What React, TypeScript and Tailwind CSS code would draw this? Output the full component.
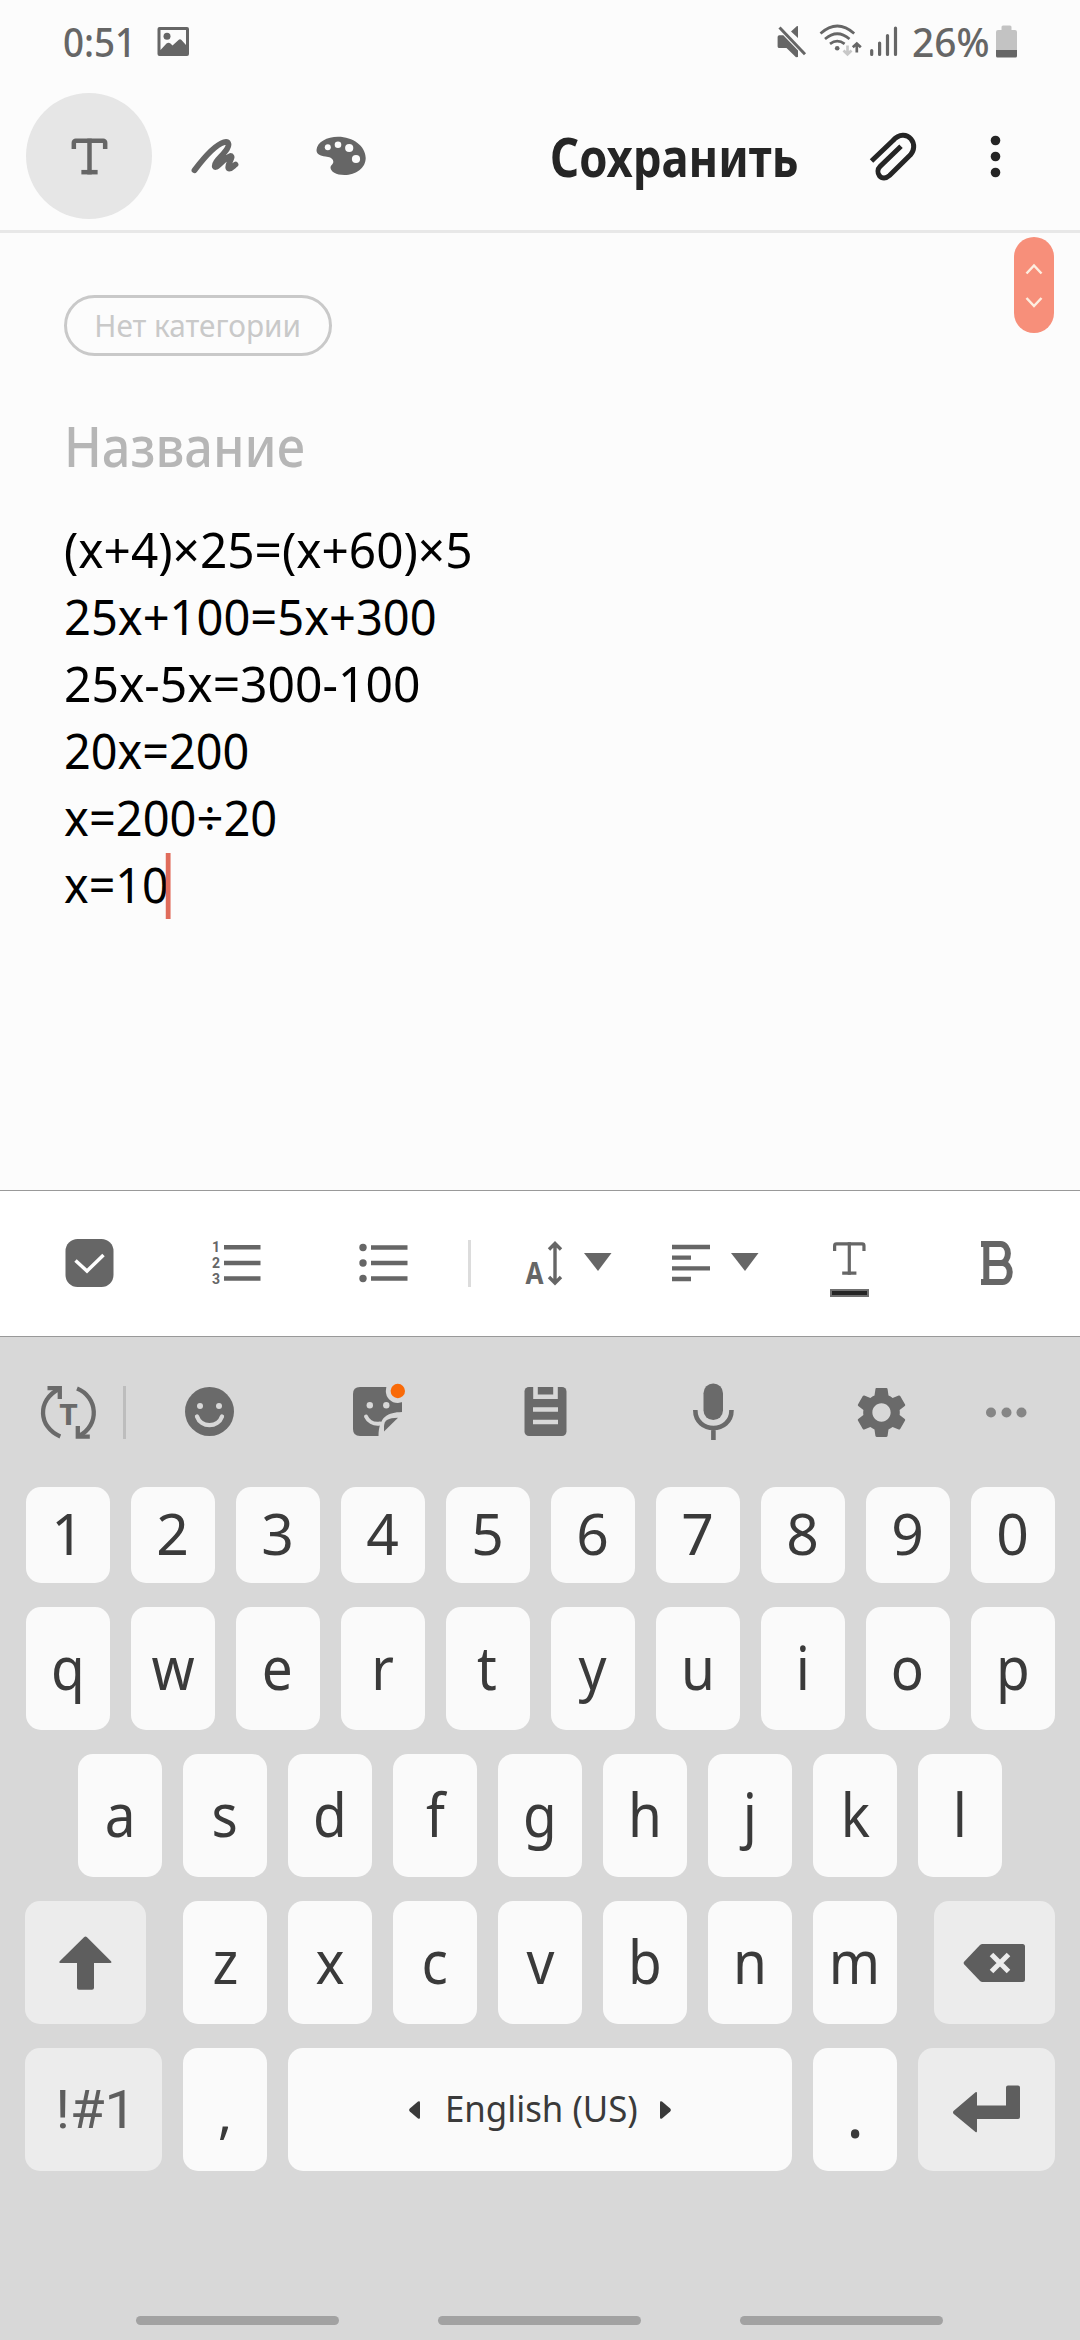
import type { ReactNode } from "react";
import { Bold, Type } from "lucide-react";
import { MdSettings } from "react-icons/md";
import clsx from "clsx";

type IconProps = {
  box: [number, number, number, number];
  className?: string;
  children: ReactNode;
};

function Icon({ box, className, children }: IconProps) {
  return (
    <svg
      viewBox={box.join(" ")}
      width={box[2]}
      height={box[3]}
      fill="currentColor"
      className={clsx("shrink-0", className)}
    >
      {children}
    </svg>
  );
}

function StatusBar() {
  return (
    <div className="flex h-[82px] items-center pl-[63px] text-[#666666]">
      <span className="w-[94px] pt-0.5 text-[40px] leading-[40px] font-medium">
        <span className="inline-block origin-left scale-x-[0.92]">0:51</span>
      </span>
      <Icon box={[157, 23, 32, 36]}>
        <path
          fillRule="evenodd"
          d="M159.500 27h27.500a2 2 0 0 1 2 2v25a2 2 0 0 1-2 2h-27.500a2 2 0 0 1-2-2v-25a2 2 0 0 1 2-2zM160.500 30v20l6-6.500q2-1.500 4 0l2 2 6-5.500q1.500-1.500 3 0l4.500 5v-15z"
        />
        <circle cx="167" cy="36.300" r="3.500" />
      </Icon>
      <Icon box={[776, 23, 32, 36]} className="ml-[587px]">
        <path d="M777.600 37q0-1.700 1.700-1.700h4L798 50.500V57l-2 .3-9.500-9.300h-7.200q-1.700 0-1.700-1.500zM791 31.500l6-5.500 1 .3V38z" />
        <path d="M779.500 27.500L805 54.200" stroke="currentColor" strokeWidth="3" />
      </Icon>
      <Icon box={[818, 23, 46, 36]} className="ml-2.5">
        <g fill="none" stroke="currentColor" strokeWidth="2.700">
          <path d="M820.500 33.500q16.800-15 33.700 0M825 39q12.300-10.500 24.500 0M830 43.800q7.300-5.500 14.600 0" />
          <path d="M856.800 52.500v-8.500M852.800 47.300l4-3.800 4 3.800" />
          <path d="M847.500 45.500v8M843.500 50.500l4 3.800 4-3.800" stroke="#c8c8c8" />
        </g>
        <circle cx="837.200" cy="48.300" r="2.300" />
      </Icon>
      <Icon box={[869, 23, 30, 36]} className="ml-[5px]">
        <path
          d="M871.700 50.500v4M879.600 43v11.500M887.500 35.500v19M895.500 28v26.500"
          stroke="currentColor"
          strokeWidth="3.200"
          strokeLinecap="round"
        />
      </Icon>
      <span className="ml-[13px] w-[83px] pt-0.5 text-[40px] leading-[40px] font-medium">
        <span className="inline-block origin-left scale-x-[0.97]">26%</span>
      </span>
      <Icon box={[995, 23, 23, 36]}>
        <path d="M1001.500 30v-3q0-1.500 1.500-1.500h7q1.500 0 1.500 1.500v3h3.500q2 0 2 2v18h-21v-18q0-2 2-2z" fill="#c3c3c3" />
        <path d="M996 50h21v6q0 1.600-1.600 1.600h-17.800q-1.600 0-1.600-1.600z" />
      </Icon>
    </div>
  );
}

function NoteHeader() {
  return (
    <header className="flex h-[151px] items-center border-b-[3px] border-[#e8e8e8] pl-[26px] text-[#666666]">
      <button className="flex size-[126px] shrink-0 items-center justify-center rounded-full bg-[#e6e6e6]">
        <Type size={47} strokeWidth={2.3} strokeLinecap="square" />
      </button>
      <Icon box={[191, 134, 50, 44]} className="ml-[39px]">
        <path
          d="M194.500 170.300C203 159 215 145 224 142.300C228.500 141 229.800 144.500 227 149C223 155.500 214 161.500 214.800 166.500C216.500 169.500 224 158 230.500 156C234.500 156 226 166 228.500 168.300C230.500 170 233.500 165.500 235.500 164.500"
          fill="none"
          stroke="currentColor"
          strokeWidth="5.800"
          strokeLinecap="round"
          strokeLinejoin="round"
        />
      </Icon>
      <Icon box={[316, 134, 50, 44]} className="ml-[75px]">
        <path d="M316.500 150C317 142 327 136.700 338 136.700C353 136.700 365.700 146 365.700 158C365.700 168 356 175 344.500 175C336 175 330.500 171.500 330.500 167.500C330.500 165 333.500 164.500 333.300 161.500C333 158 329 156.800 325.500 156.500C320 156 316.500 154 316.500 150Z" />
        <g fill="#fcfcfc">
          <circle cx="327.800" cy="147.300" r="3" />
          <circle cx="338" cy="144.700" r="3.300" />
          <circle cx="349.200" cy="148" r="4.100" />
          <circle cx="356" cy="159" r="4.100" />
        </g>
      </Icon>
      <button className="ml-[184px] w-[318px] text-left text-[54px] leading-[60px] font-bold text-[#252525]">
        <span className="inline-block origin-left scale-x-[0.84]">Сохранить</span>
      </button>
      <Icon box={[868, 131, 52, 50]} className="text-[#252525]">
        <path
          d="M871.500 161L893 140.500C899 133.500 907 134 911 139C915 144 914.300 150.500 910.500 154.800L889.500 175.500C886 178.800 881.700 178.500 879.500 175.800C877.300 173 877.500 169 880 166.500L901 146.300"
          fill="none"
          stroke="currentColor"
          strokeWidth="5"
          strokeLinejoin="round"
        />
      </Icon>
      <Icon box={[990, 134, 12, 44]} className="ml-[70px] text-[#252525]">
        <circle cx="995.500" cy="140.500" r="4.800" />
        <circle cx="995.500" cy="156.500" r="4.800" />
        <circle cx="995.500" cy="172.500" r="4.800" />
      </Icon>
    </header>
  );
}

const lines = [
  { text: "(x+4)×25=(x+60)×5", className: "scale-x-[0.985]" },
  { text: "25x+100=5x+300", className: "scale-x-[0.97]" },
  { text: "25x-5x=300-100", className: "scale-x-[0.99]" },
  { text: "20x=200", className: "scale-x-[0.965]" },
  { text: "x=200÷20", className: "scale-x-[0.97]" },
  { text: "x=10", className: "scale-x-[0.96]" },
];

function NoteBody() {
  return (
    <main className="relative h-[957px] pt-[62px] pl-[64px]">
      <div className="flex h-[61px] w-[268px] items-center justify-center rounded-full border-[3px] border-[#c9c9c9] text-[31px] text-[#c9c9c9]">
        <span className="inline-block scale-x-[0.96] whitespace-nowrap">Нет категории</span>
      </div>
      <h1 className="mt-[51px] text-[56px] leading-[76px] font-medium text-[#b6b6b6]">
        <span className="inline-block origin-left scale-x-90">Название</span>
      </h1>
      <div className="mt-[33px] text-[48.500px] leading-[67px] text-black">
        {lines.map(({ text, className }, i) => (
          <p key={text} className="flex h-[67px]">
            <span className={clsx("relative inline-block origin-left", className)}>
              {text}
              {i === lines.length - 1 && (
                <span className="absolute top-0.5 -right-0.5 h-[66px] w-[5px] bg-[#e06c5b]" />
              )}
            </span>
          </p>
        ))}
      </div>
      <div className="absolute top-1 right-[26px] h-24 w-10 rounded-full bg-[#f78f7a]">
        <Icon box={[1014, 237, 40, 96]}>
          <path
            d="M1026.500 273.500L1034 265.500L1041.500 273.500M1026.500 298L1034 306L1041.500 298"
            fill="none"
            stroke="#fdeee0"
            strokeWidth="2.500"
          />
        </Icon>
      </div>
    </main>
  );
}

function FormatBar() {
  return (
    <div className="flex h-[147px] items-center border-y border-[#999999] bg-white pl-[65px] text-[#666666]">
      <Icon box={[65, 1229, 49, 69]}>
        <rect x="65.500" y="1239" width="48" height="48" rx="12" />
        <path d="M75.500 1260.500L87 1271L103.500 1255" fill="none" stroke="#fff" strokeWidth="3.500" />
      </Icon>
      <Icon box={[211, 1229, 50, 69]} className="ml-[97px]">
        <path d="M224 1247.300h36.500M224 1263h36.500M224 1278.500h36.500" stroke="currentColor" strokeWidth="4.600" />
        <g className="font-['Roboto',sans-serif] text-[14px] font-bold">
          <text x="212" y="1252.300">1</text>
          <text x="212" y="1268.300">2</text>
          <text x="212" y="1284.300">3</text>
        </g>
      </Icon>
      <Icon box={[359, 1229, 49, 69]} className="ml-[98px]">
        <path d="M371 1247.500h36.500M371 1263h36.500M371 1278.500h36.500" stroke="currentColor" strokeWidth="4.600" />
        <circle cx="363" cy="1247.500" r="3.700" />
        <circle cx="363" cy="1263" r="3.700" />
        <circle cx="363" cy="1278.500" r="3.700" />
      </Icon>
      <span className="ml-[60px] h-[47px] w-[3px] bg-[#dcdcdc]" />
      <Icon box={[525, 1229, 38, 69]} className="ml-[54px]">
        <text x="525.500" y="1283.800" textLength="18" lengthAdjust="spacingAndGlyphs" className="text-[30px] font-bold">
          A
        </text>
        <path
          d="M555 1243.500v39M549 1249.500l6-6 6 6M549 1277l6 6 6-6"
          fill="none"
          stroke="currentColor"
          strokeWidth="3.400"
        />
      </Icon>
      <Icon box={[584, 1229, 28, 69]} className="ml-[21px]">
        <path d="M584 1253h27.500L598 1271z" />
      </Icon>
      <Icon box={[672, 1229, 38, 69]} className="ml-[60px]">
        <path d="M672 1247h38M672 1257.700h19M672 1268.300h38M672 1279h19" stroke="currentColor" strokeWidth="4.300" />
      </Icon>
      <Icon box={[731, 1229, 28, 69]} className="ml-[21px]">
        <path d="M731 1253h27.500L745 1271z" />
      </Icon>
      <Icon box={[829, 1229, 41, 69]} className="ml-[70px]">
        <Type x={827.3} y={1236.5} size={44} strokeWidth={1.75} strokeLinecap="square" />
        <rect x="831" y="1290" width="37" height="6" fill="#252525" stroke="#707070" strokeWidth="2" />
      </Icon>
      <Icon box={[980, 1229, 34, 69]} className="ml-[110px]">
        <Bold
          x={975.5}
          y={1234.5}
          width={43.2}
          height={57}
          strokeWidth={6}
          preserveAspectRatio="none"
          className="[&_path]:[vector-effect:non-scaling-stroke]"
        />
        {/* slab serifs on the stem */}
        <path d="M981 1244h10M981 1282h10" stroke="currentColor" strokeWidth="6" />
      </Icon>
    </div>
  );
}

function KeyboardTools() {
  return (
    <div className="flex h-[150px] items-center pl-[40px] text-[#6a6a6a]">
      <Icon box={[40, 1383, 57, 58]}>
        <g fill="none" stroke="currentColor" strokeWidth="4.300">
          <path d="M60.300 1436.500C38 1427 37 1400 59 1389" />
          <path d="M47.500 1388.200H59.800V1399" />
          <path d="M77 1388.500C98 1397 100 1425 79 1436" />
          <path d="M89.800 1436.700H77.800V1426" />
        </g>
        <text x="59.300" y="1424.800" textLength="18.500" lengthAdjust="spacingAndGlyphs" className="text-[29px] font-bold">
          T
        </text>
      </Icon>
      <span className="ml-[26px] h-[53px] w-[3px] bg-[#bdbdbd]" />
      <Icon box={[185, 1383, 49, 58]} className="ml-[59px]">
        <circle cx="209.500" cy="1411.500" r="24.500" />
        <g fill="#d8d8d8">
          <circle cx="200" cy="1406" r="3" />
          <circle cx="219" cy="1406" r="3" />
        </g>
        <path d="M197 1416.500C201 1428 218 1428 222 1416.500" fill="none" stroke="#d8d8d8" strokeWidth="4.300" strokeLinecap="round" />
      </Icon>
      <Icon box={[353, 1383, 52, 58]} className="ml-[119px]">
        <path d="M360 1387H395Q402 1387 402 1394V1412C388 1412.500 379 1416 378.500 1436H360Q353 1436 353 1429V1394Q353 1387 360 1387Z" />
        <path d="M384 1431.500V1426C384.500 1420 388 1418 398 1417.700Z" />
        <path d="M366 1416.500C368 1421 373 1424.500 380 1423.500" fill="none" stroke="#d8d8d8" strokeWidth="4" strokeLinecap="round" />
        <circle cx="369.800" cy="1405.300" r="3.200" fill="#d8d8d8" />
        <circle cx="386.300" cy="1405.300" r="3.200" fill="#d8d8d8" />
        <circle cx="397.800" cy="1391" r="12" fill="#d8d8d8" />
        <circle cx="397.800" cy="1391" r="7.200" fill="#f96a08" />
      </Icon>
      <Icon box={[524, 1383, 43, 58]} className="ml-[119px]">
        <rect x="524.500" y="1387" width="42" height="49" rx="4.500" />
        <path d="M535.500 1386V1396.700H555.500V1386M533 1409.500H558M533 1422H558" fill="none" stroke="#d8d8d8" strokeWidth="4.600" />
      </Icon>
      <Icon box={[692, 1383, 43, 58]} className="ml-[125px]">
        <rect x="703.500" y="1383.500" width="19.500" height="36.500" rx="9.700" />
        <path d="M695.300 1410C695.300 1434 731.500 1434 731.500 1410M713.400 1428V1440" fill="none" stroke="currentColor" strokeWidth="4.600" />
      </Icon>
      <MdSettings size={61} className="ml-[116px] shrink-0" />
      <Icon box={[986, 1406, 41, 11]} className="ml-[74px] text-[#868686]">
        <circle cx="991" cy="1411.500" r="5" />
        <circle cx="1006.500" cy="1411.500" r="5" />
        <circle cx="1021.500" cy="1411.500" r="5" />
      </Icon>
    </div>
  );
}

type KeyProps = {
  className?: string;
  muted?: boolean;
  children: ReactNode;
};

function Key({ className = "w-[84px]", muted, children }: KeyProps) {
  return (
    <button
      className={clsx(
        "flex h-full shrink-0 items-center justify-center rounded-[15px]",
        muted ? "bg-[#ececec] text-[#5e5e5e]" : "bg-[#fafafa] text-[#3a3a3a]",
        className,
      )}
    >
      {children}
    </button>
  );
}

function LetterKey({ char }: { char: string }) {
  return (
    <Key>
      <span className="inline-block scale-x-90 pb-1 text-[61px] leading-[80px]">{char}</span>
    </Key>
  );
}

function Keyboard() {
  return (
    <div className="flex flex-col gap-6">
      <div className="flex h-24 justify-center gap-[21px]">
        {"1234567890".split("").map((n) => (
          <Key key={n}>
            <span className="pb-1 text-[57px] leading-[80px]">{n}</span>
          </Key>
        ))}
      </div>
      <div className="flex h-[123px] justify-center gap-[21px]">
        {"qwertyuiop".split("").map((c) => (
          <LetterKey key={c} char={c} />
        ))}
      </div>
      <div className="flex h-[123px] justify-center gap-[21px]">
        {"asdfghjkl".split("").map((c) => (
          <LetterKey key={c} char={c} />
        ))}
      </div>
      <div className="flex h-[123px] justify-between px-[25px]">
        <Key muted className="w-[121px]">
          <Icon box={[59, 1934, 53, 56]}>
            <path d="M84 1936.300q1.500-1.500 3 0l24 24q1.200 1.700-.8 1.700H94v24.700q0 2-2 2H79q-2 0-2-2V1962H60.500q-2 0-.8-1.700z" />
          </Icon>
        </Key>
        <div className="flex gap-[21px]">
          {"zxcvbnm".split("").map((c) => (
            <LetterKey key={c} char={c} />
          ))}
        </div>
        <Key muted className="w-[121px]">
          <Icon box={[963, 1942, 63, 40]}>
            <path d="M982.500 1943H1022.500q2.500 0 2.500 2.500V1978.500q0 2.500-2.500 2.500H982.500q-1.500 0-2.500-1L964.300 1963.500q-1.300-1.500 0-3L980 1944q1-1 2.500-1z" />
            <path d="M991.500 1953.500l17 17M1008.500 1953.500l-17 17" stroke="#ececec" strokeWidth="5" />
          </Icon>
        </Key>
      </div>
      <div className="flex h-[123px] gap-[21px] px-[25px]">
        <Key muted className="w-[137px]">
          <span className="inline-block scale-x-[1.04] pl-1 font-['Roboto',sans-serif] text-[54px] leading-[60px]">
            !#1
          </span>
        </Key>
        <Key>
          <span className="pt-1 text-[54px] leading-[60px]">,</span>
        </Key>
        <Key className="w-[504px] gap-[25px]">
          <Icon box={[409, 2100, 11, 20]}>
            <path d="M418 2101.500q2-1 2 1V2117.500q0 2-2 1L409.800 2111.500q-1.300-1.500 0-3z" />
          </Icon>
          <span className="w-[190px] pb-1 text-left text-[35.500px] leading-[44px] whitespace-nowrap">
            <span className="inline-block origin-left scale-x-[0.98]">English (US)</span>
          </span>
          <Icon box={[660, 2100, 11, 20]}>
            <path d="M662 2101.500q-2-1-2 1V2117.500q0 2 2 1L670.200 2111.500q1.300-1.500 0-3z" />
          </Icon>
        </Key>
        <Key>
          <span className="pt-1 text-[68px] leading-[80px]">.</span>
        </Key>
        <Key muted className="w-[137px]">
          <Icon box={[952, 2085, 69, 49]}>
            <path d="M1008 2085.500h10q2 0 2 2V2117q0 2-2 2H977v12q0 2-1.500 1L953.500 2113.700q-1-1.400 0-2.800L975.500 2092.300q1.500-1 1.500 1V2105.500h29V2087.500q0-2 2-2z" />
          </Icon>
        </Key>
      </div>
    </div>
  );
}

function NavHints() {
  return (
    <div className="flex gap-[99px] pt-[145px] pl-[136px]">
      <span className="h-[9px] w-[203px] rounded-full bg-[#a2a2a2]" />
      <span className="h-[9px] w-[203px] rounded-full bg-[#a2a2a2]" />
      <span className="h-[9px] w-[203px] rounded-full bg-[#a2a2a2]" />
    </div>
  );
}

export default function App() {
  return (
    <div className="flex h-[2340px] w-[1080px] flex-col overflow-hidden bg-[#fcfcfc] font-['Noto_Sans',sans-serif]">
      <StatusBar />
      <NoteHeader />
      <NoteBody />
      <FormatBar />
      <section className="flex-1 bg-[#d8d8d8]">
        <KeyboardTools />
        <Keyboard />
        <NavHints />
      </section>
    </div>
  );
}
